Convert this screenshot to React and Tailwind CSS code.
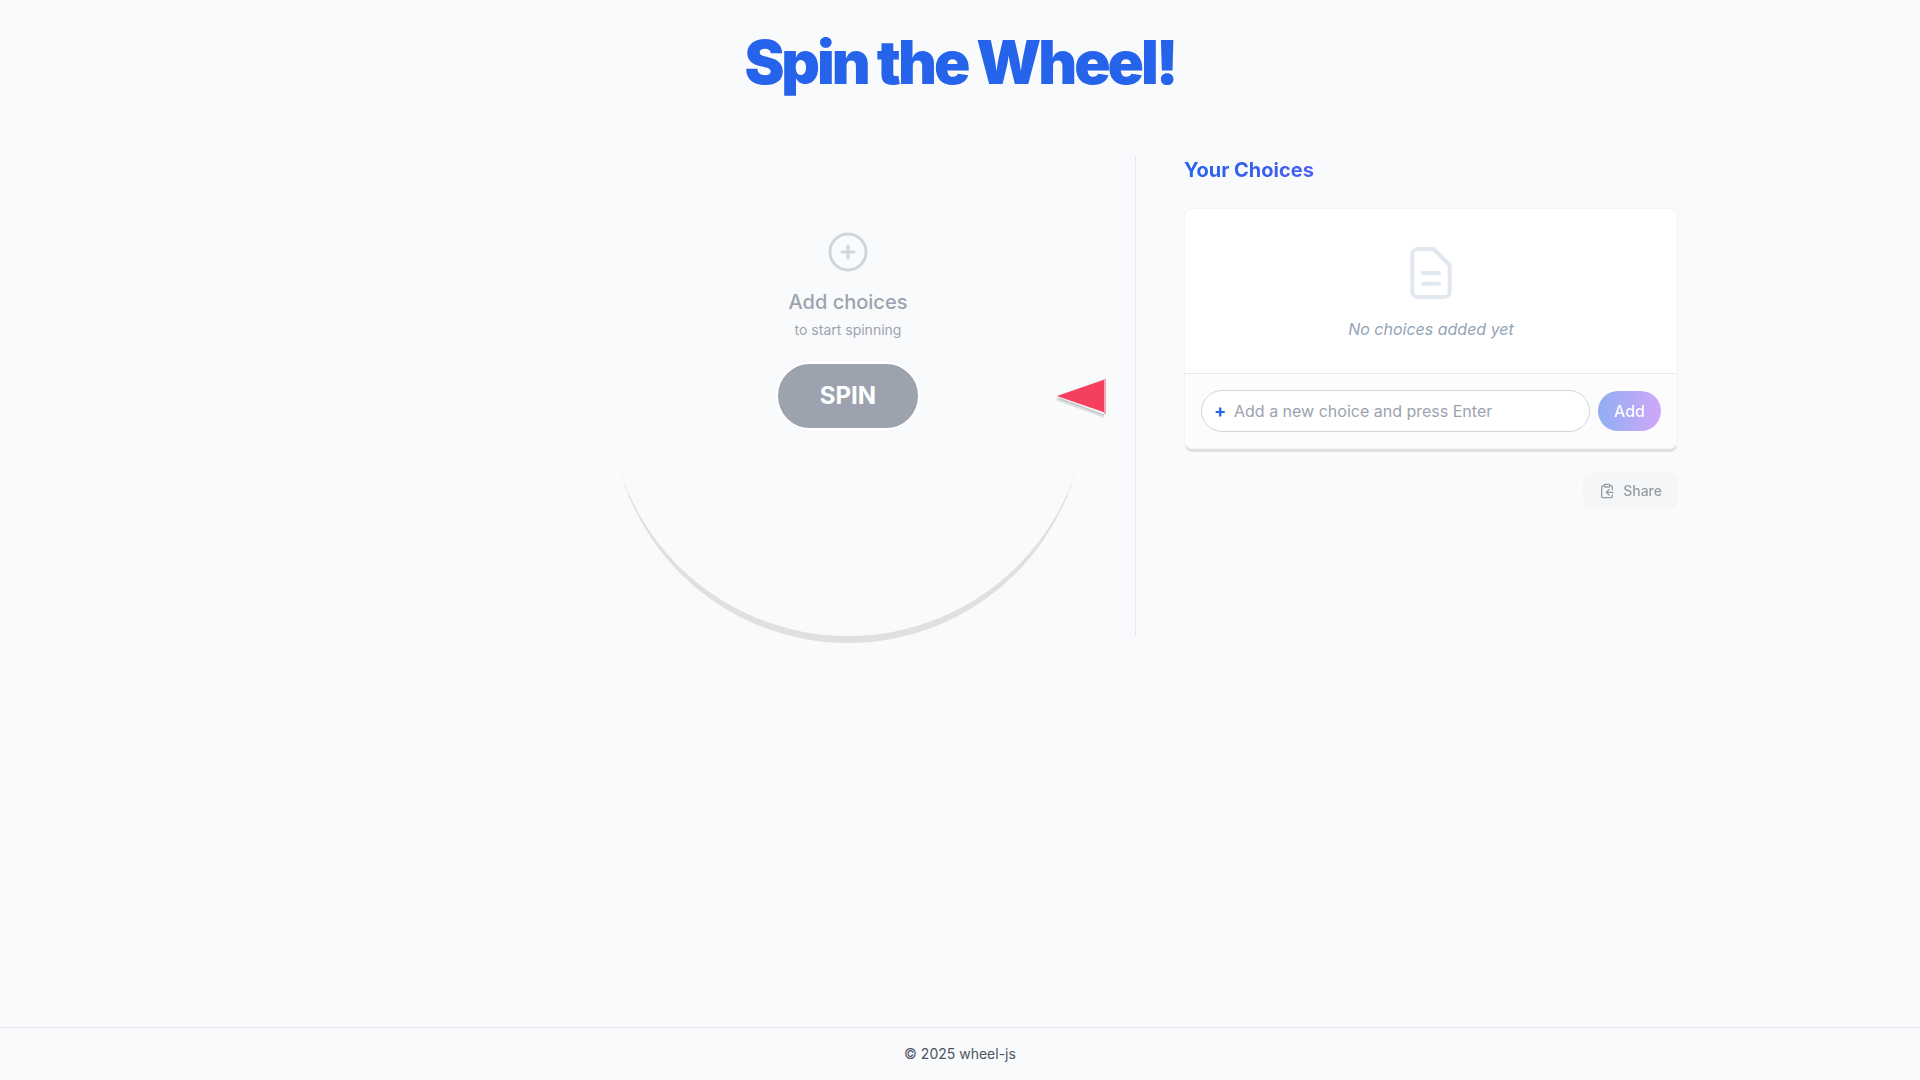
import { useState } from 'react';
import { ClipboardCopy } from 'lucide-react';

export default function App() {
  const [choices, setChoices] = useState([]);
  const [value, setValue] = useState('');

  const handleSubmit = (e) => {
    e.preventDefault();
    if (!value.trim()) return;
    setChoices([...choices, value.trim()]);
    setValue('');
  };

  return (
    <div className="flex min-h-screen flex-col bg-[#f9fafc] font-['Inter',sans-serif] text-gray-900">
      <header className="pt-8 pb-16 text-center">
        <h1 className="text-6xl font-black tracking-tighter text-[#2563eb]">Spin the Wheel!</h1>
      </header>

      <main className="mx-auto grid w-full max-w-[1436px] flex-1 grid-cols-[1fr_542px] items-start">
        {/* Wheel */}
        <section className="flex justify-end border-r border-[#e5e7eb] pr-[47px]">
          <div className="relative flex h-[480px] w-[480px] flex-col items-center rounded-full pt-[72px] shadow-[0_10px_0_-3px_rgba(0,0,0,0.1)]">
            <svg className="mb-3 h-12 w-12 text-[#d1d5db]" fill="none" viewBox="0 0 24 24" stroke="currentColor" strokeWidth="1.5" strokeLinecap="round" strokeLinejoin="round">
              <path d="M12 9v3m0 0v3m0-3h3m-3 0H9m12 0a9 9 0 11-18 0 9 9 0 0118 0z" />
            </svg>
            <p className="text-xl font-medium text-[#9ca3af]">Add choices</p>
            <p className="mt-1 text-sm text-[#9ca3af]">to start spinning</p>
            <button
              type="button"
              disabled={choices.length === 0}
              className="mt-[22px] h-[68px] w-36 rounded-full border-2 border-white bg-[#9ca3af] text-2xl font-bold text-white"
            >
              SPIN
            </button>
            <svg className="absolute top-[216px] -right-[22px] h-12 w-16" viewBox="0 0 64 48">
              <path d="M9 28L58 11V46Z" fill="#000" fillOpacity="0.1" />
              <path d="M9 26L58 9V44Z" fill="#000" fillOpacity="0.1" />
              <path d="M9 24L60 5V43Z" fill="#f6f7f8" />
              <path d="M11 24L60 7V41Z" fill="#f43f5e" />
              <path d="M58 7H60V42H58Z" fill="#f9a3b1" />
            </svg>
          </div>
        </section>

        {/* Choices */}
        <section className="pl-12">
          <h2 className="w-full bg-linear-to-r/srgb from-[#2563eb] to-[#a855f7] bg-clip-text text-xl font-bold text-transparent">Your Choices</h2>

          <div className="mt-6 overflow-hidden rounded-lg border border-[#f3f4f6] bg-white shadow-[0_4px_0_-1px_rgba(0,0,0,0.1)]">
            {choices.length === 0 ? (
              <div className="flex flex-col items-center p-8">
                <svg className="mb-3 h-16 w-16 text-[#e2e8f0]" fill="none" viewBox="0 0 24 24" stroke="currentColor" strokeWidth="1.5" strokeLinecap="round" strokeLinejoin="round">
                  <path d="M9 12h6m-6 4h6m2 5H7a2 2 0 01-2-2V5a2 2 0 012-2h5.586a1 1 0 01.707.293l5.414 5.414a1 1 0 01.293.707V19a2 2 0 01-2 2z" />
                </svg>
                <p className="text-[#94a3b8] italic">No choices added yet</p>
              </div>
            ) : (
              <ul className="p-4">
                {choices.map((c, i) => <li key={i} className="py-2">{c}</li>)}
              </ul>
            )}

            <form onSubmit={handleSubmit} className="flex items-center gap-2 border-t border-[#e5e7eb] bg-[#fcfcfd] p-4">
              <label className="flex h-[42px] flex-1 items-center gap-2 rounded-full border border-[#d1d5db] bg-white px-3">
                <span className="w-3 text-lg font-bold text-[#2563eb]">+</span>
                <input
                  type="text"
                  value={value}
                  onChange={(e) => setValue(e.target.value)}
                  aria-label="New choice"
                  placeholder="Add a new choice and press Enter"
                  className="min-w-0 flex-1 bg-transparent outline-none placeholder:text-[#9ca3af]"
                />
              </label>
              <button
                type="submit"
                className="rounded-full bg-linear-to-r/srgb from-[#2563eb] to-[#a855f7] px-4 py-2 font-medium text-white opacity-50"
              >
                Add
              </button>
            </form>
          </div>

          <div className="mt-6 flex justify-end">
            <button type="button" className="flex items-center gap-2 rounded-lg bg-[#f3f4f6] px-4 py-2 text-sm font-medium text-[#374151] opacity-50">
              <ClipboardCopy className="h-4 w-4" /> Share
            </button>
          </div>
        </section>
      </main>

      <footer className="border-t border-[#e5e7eb] py-4 text-center text-sm text-[#4b5563]">
        © 2025 wheel-js
      </footer>
    </div>
  );
}
